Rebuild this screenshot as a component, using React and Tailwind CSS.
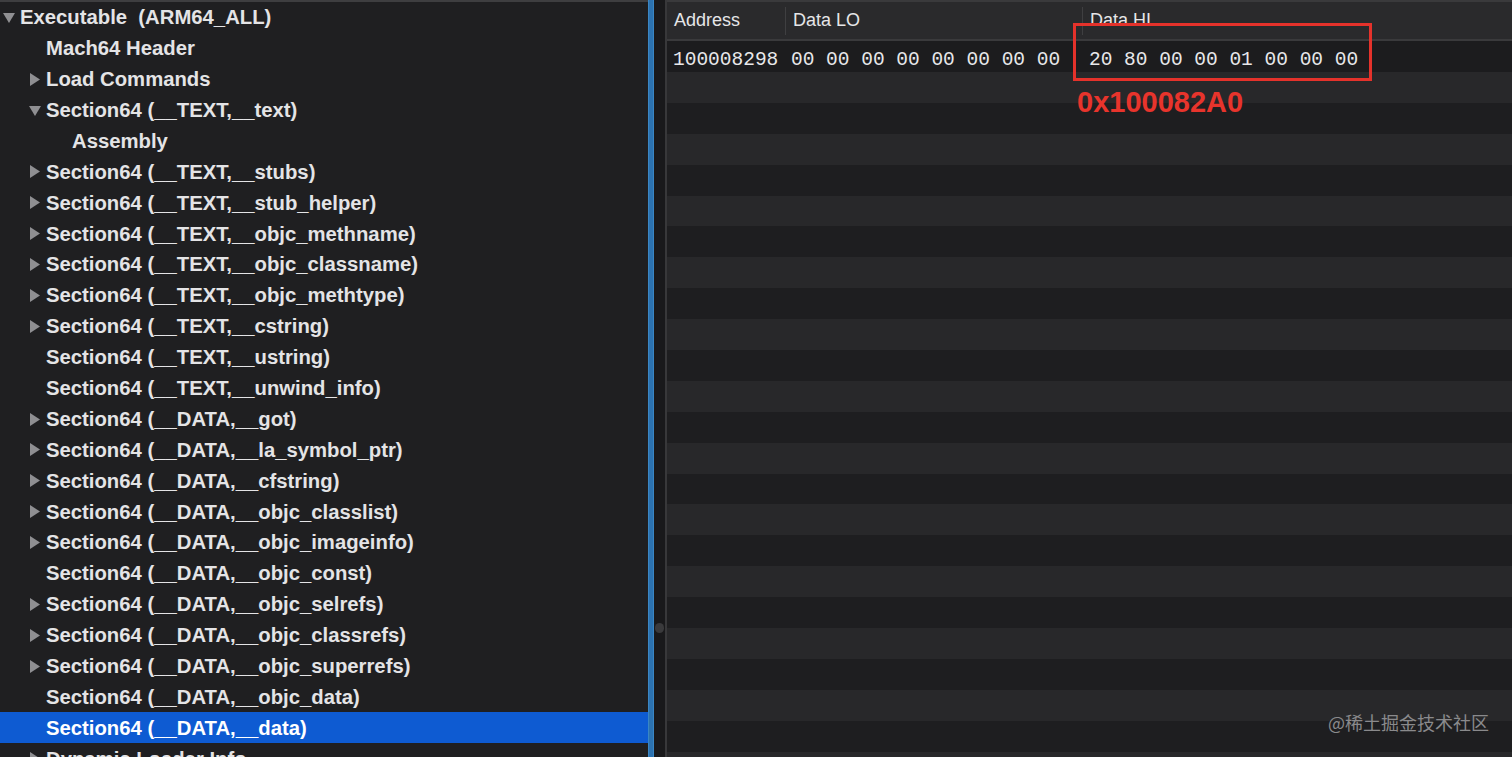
import React from "react";

const rows = [
  { t: "Executable  (ARM64_ALL)", l: 0, tri: "down" },
  { t: "Mach64 Header", l: 1 },
  { t: "Load Commands", l: 1, tri: "right" },
  { t: "Section64 (__TEXT,__text)", l: 1, tri: "down" },
  { t: "Assembly", l: 2 },
  { t: "Section64 (__TEXT,__stubs)", l: 1, tri: "right" },
  { t: "Section64 (__TEXT,__stub_helper)", l: 1, tri: "right" },
  { t: "Section64 (__TEXT,__objc_methname)", l: 1, tri: "right" },
  { t: "Section64 (__TEXT,__objc_classname)", l: 1, tri: "right" },
  { t: "Section64 (__TEXT,__objc_methtype)", l: 1, tri: "right" },
  { t: "Section64 (__TEXT,__cstring)", l: 1, tri: "right" },
  { t: "Section64 (__TEXT,__ustring)", l: 1 },
  { t: "Section64 (__TEXT,__unwind_info)", l: 1 },
  { t: "Section64 (__DATA,__got)", l: 1, tri: "right" },
  { t: "Section64 (__DATA,__la_symbol_ptr)", l: 1, tri: "right" },
  { t: "Section64 (__DATA,__cfstring)", l: 1, tri: "right" },
  { t: "Section64 (__DATA,__objc_classlist)", l: 1, tri: "right" },
  { t: "Section64 (__DATA,__objc_imageinfo)", l: 1, tri: "right" },
  { t: "Section64 (__DATA,__objc_const)", l: 1 },
  { t: "Section64 (__DATA,__objc_selrefs)", l: 1, tri: "right" },
  { t: "Section64 (__DATA,__objc_classrefs)", l: 1, tri: "right" },
  { t: "Section64 (__DATA,__objc_superrefs)", l: 1, tri: "right" },
  { t: "Section64 (__DATA,__objc_data)", l: 1 },
  { t: "Section64 (__DATA,__data)", l: 1, sel: true },
  { t: "Dynamic Loader Info", l: 1, tri: "right" },
];

function Tri({ dir }) {
  if (dir === "down") {
    return (
      <svg width="12" height="11" viewBox="0 0 12 11" className="shrink-0">
        <polygon points="0,1 12,1 6,11" fill="#8f8f92" />
      </svg>
    );
  }
  if (dir === "right") {
    return (
      <svg width="12" height="13" viewBox="0 0 12 13" className="shrink-0">
        <polygon points="1,0 11,6.5 1,13" fill="#8f8f92" />
      </svg>
    );
  }
  return <span className="w-[12px] shrink-0" />;
}

const indents = ["pl-[3px]", "pl-[29px]", "pl-[55px]"];

export default function App() {
  const stripes = Array.from({ length: 23 });
  return (
    <div className="relative flex w-[1512px] h-[757px] overflow-hidden bg-[#1f1f21] font-['Liberation_Sans',sans-serif]">
      {/* Left tree */}
      <div className="w-[648px] h-full shrink-0 flex flex-col border-t-2 border-[#3e3e40] bg-[#1f1f21]">
        {rows.map((r, i) => (
          <div
            key={i}
            className={`h-[30.9px] shrink-0 flex items-center gap-[5px] ${indents[r.l]} ${
              r.sel ? "bg-[#0e5bd2] text-white" : "text-[#e4e4e6]"
            }`}
          >
            <Tri dir={r.tri} />
            <span className="text-[20.3px] font-bold whitespace-pre leading-none">{r.t}</span>
          </div>
        ))}
      </div>

      {/* Splitter */}
      <div className="w-[6px] h-full shrink-0 bg-[#2c72b0] border-x border-[#3a86c4]" />
      <div className="relative w-[11px] h-full shrink-0 bg-[#19191b]">
        <div className="absolute left-[1px] top-[623px] w-[9px] h-[10px] rounded-full bg-[#3a3a3c]" />
      </div>
      <div className="w-[2px] h-full shrink-0 bg-[#38383a]" />

      {/* Right table */}
      <div className="flex-1 h-full flex flex-col bg-[#1e1e20]">
        <div className="h-[41px] shrink-0 flex items-center bg-[#2a2a2c] border-t-2 border-b-2 border-t-[#3a3a3c] border-b-[#3a3a3c] text-[18px] text-[#e6e6e8]">
          <div className="w-[118px] pl-[7px]">Address</div>
          <div className="w-px h-[28px] bg-[#3f3f41]" />
          <div className="w-[296px] pl-[7px]">Data LO</div>
          <div className="w-px h-[28px] bg-[#3f3f41]" />
          <div className="pl-[7px]">Data HI</div>
        </div>
        <div className="h-[31px] shrink-0 flex items-center pt-[9px] bg-[#1c1c1e] font-['Liberation_Mono',monospace] text-[19.5px] leading-none text-[#e8e8ea] whitespace-pre">
          <div className="w-[118px] pl-[6px]">100008298</div>
          <div className="w-[297px] pl-[6px]">00 00 00 00 00 00 00 00</div>
          <div className="pl-[7px]">20 80 00 00 01 00 00 00</div>
        </div>
        {stripes.map((_, i) => (
          <div
            key={i}
            className={`h-[30.9px] shrink-0 ${i % 2 === 0 ? "bg-[#28282a]" : "bg-[#1e1e20]"}`}
          />
        ))}
      </div>

      {/* Annotation overlays */}
      <div className="absolute left-[1073px] top-[23px] w-[299px] h-[58px] border-[3px] border-[#e5322b]" />
      <div className="absolute left-[1077px] top-[88px] text-[29px] leading-none font-bold text-[#e8342c]">
        0x100082A0
      </div>
      <div className="absolute left-[1328px] top-[711px] text-[18px] leading-[22px] text-[#8a8a8c] font-['Noto_Sans_CJK_SC',sans-serif]">
        @稀土掘金技术社区
      </div>
    </div>
  );
}
